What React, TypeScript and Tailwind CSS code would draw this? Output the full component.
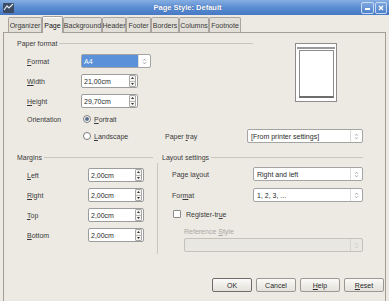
import React from "react";

const U = ({ children }: { children: React.ReactNode }) => (
  <span className="underline underline-offset-[1px] decoration-[0.5px]">{children}</span>
);

function SpinArrows() {
  return (
    <div className="w-[7px] h-[12px] mr-[1px] flex flex-col border border-[#a8a8a8] rounded-[1px] bg-[#f4f3f0]">
      <div className="flex-1 flex items-center justify-center border-b border-[#b8b8b8]">
        <svg width="3" height="2" viewBox="0 0 3 2">
          <polygon points="1.5,0 3,2 0,2" fill="#333" />
        </svg>
      </div>
      <div className="flex-1 flex items-center justify-center">
        <svg width="3" height="2" viewBox="0 0 3 2">
          <polygon points="0,0 3,0 1.5,2" fill="#333" />
        </svg>
      </div>
    </div>
  );
}

function SelArrows({ c = "#8a8a8a" }: { c?: string }) {
  return (
    <svg width="5" height="7" viewBox="0 0 5 7">
      <path d="M1.2 2.6 L2.5 1.2 L3.8 2.6 M1.2 4.4 L2.5 5.8 L3.8 4.4" stroke={c} fill="none" strokeWidth="0.8" />
    </svg>
  );
}

function Spin({ value, w = "w-[57px]" }: { value: string; w?: string }) {
  return (
    <div className={`${w} h-[14px] bg-white border border-[#9c9c9c] rounded-[2px] flex items-center pl-[2px]`}>
      <span className="flex-1 text-[#2a2a2a]">{value}</span>
      <SpinArrows />
    </div>
  );
}

function Select({ value, w, disabled = false }: { value: string; w: string; disabled?: boolean }) {
  return (
    <div
      className={`${w} h-[14px] rounded-[2px] border flex items-center ${
        disabled ? "bg-[#e9e7e2] border-[#c4c1ba]" : "bg-white border-[#a4a4a4]"
      }`}
    >
      <span className="flex-1 pl-[3px] text-[#2a2a2a] whitespace-nowrap overflow-hidden">{value}</span>
      <div className={`w-[12px] h-full flex items-center justify-center border-l ${disabled ? "border-[#d8d5cf]" : "border-[#dcdcdc]"}`}>
        <SelArrows c={disabled ? "#c0c0c0" : "#8a8a8a"} />
      </div>
    </div>
  );
}

function Radio({ checked }: { checked?: boolean }) {
  return (
    <div className="w-[8px] h-[8px] rounded-full border border-[#7c7c7c] bg-white flex items-center justify-center">
      {checked && <div className="w-[4px] h-[4px] rounded-full bg-[#5a6f8c]" />}
    </div>
  );
}

function Header({ label, lineClass }: { label: string; lineClass: string }) {
  return (
    <div className="h-[10px] flex items-center">
      <span className="text-[#3a3a3a] whitespace-nowrap">{label}</span>
      <div className={`h-[1px] bg-[#c9c6bf] ${lineClass}`} />
    </div>
  );
}

function Tab({ label, w, selected }: { label: string; w: string; selected?: boolean }) {
  if (selected)
    return (
      <div
        className={`${w} h-[17px] -mb-[1px] relative z-10 bg-[#edeae4] border border-b-0 border-[#a39f98] rounded-t-[2px] flex items-center justify-center text-[#111] shadow-[inset_0_1px_0_#ffffff]`}
      >
        {label}
      </div>
    );
  return (
    <div
      className={`${w} h-[15px] bg-[#e2dfd8] border border-b-0 border-[#aaa69f] rounded-t-[2px] flex items-center justify-center text-[#3a3a3a]`}
    >
      {label}
    </div>
  );
}

function Btn({ label, def }: { label: React.ReactNode; def?: boolean }) {
  return (
    <div
      className={`w-[40px] h-[14px] rounded-[2px] border ${
        def ? "border-[#6c6c6c]" : "border-[#9a9893]"
      } bg-gradient-to-b from-[#fbfaf8] to-[#e4e1da] flex items-center justify-center text-[#2a2a2a]`}
    >
      <span>{label}</span>
    </div>
  );
}

export default function App() {
  return (
    <div className="w-[389px] h-[301px] bg-[#edeae4] overflow-hidden flex flex-col font-['Liberation_Sans',Arial,sans-serif] text-[7px] leading-[9px]">
      {/* Title bar */}
      <div className="h-[15px] shrink-0 flex items-center bg-gradient-to-b from-[#86aee2] via-[#5b8dd3] to-[#4778c4]">
        <div className="ml-[3px] w-[11px] h-[10px]">
          <svg width="11" height="10" viewBox="0 0 11 10">
            <rect x="0" y="0" width="11" height="10" rx="1" fill="#3d4c63" />
            <path d="M1 7 L4 3 L6 5 L10 1" stroke="#dfe8f4" strokeWidth="1.2" fill="none" />
          </svg>
        </div>
        <div className="flex-1 text-center text-white font-bold text-[7.5px] [text-shadow:0_0_1px_#2a4f8a]">
          Page Style: Default
        </div>
        <div className="flex gap-[1px] mr-[2px]">
          <div className="w-[13px] h-[12px] rounded-[2px] border border-[#c9dbf2] bg-gradient-to-b from-[#7ea7df] to-[#4f82cb] flex items-end justify-center pb-[3px]">
            <div className="w-[5px] h-[2px] bg-white" />
          </div>
          <div className="w-[12px] h-[12px] rounded-[2px] border border-[#c9dbf2] bg-gradient-to-b from-[#7ea7df] to-[#4f82cb] flex items-center justify-center">
            <svg width="6" height="6" viewBox="0 0 6 6">
              <path d="M1 1 L5 5 M5 1 L1 5" stroke="#fff" strokeWidth="1.3" />
            </svg>
          </div>
        </div>
      </div>

      {/* Tabs */}
      <div className="h-[17px] shrink-0 flex items-end pl-[8px]">
        <Tab label="Organizer" w="w-[34px]" />
        <Tab label="Page" w="w-[21px]" selected />
        <Tab label="Background" w="w-[39px]" />
        <Tab label="Header" w="w-[24px]" />
        <Tab label="Footer" w="w-[25px]" />
        <Tab label="Borders" w="w-[28px]" />
        <Tab label="Columns" w="w-[30px]" />
        <Tab label="Footnote" w="w-[32px]" />
      </div>

      {/* Panel */}
      <div className="flex-1 mx-[3px] border-t border-l border-r border-[#a39f98] flex flex-col text-[#3a3a3a]">
        {/* Paper format */}
        <div className="flex pt-[5px]">
          <div className="w-[250px] flex flex-col">
            <div className="pl-[13px] pr-[1px]">
              <Header label="Paper format" lineClass="flex-1 ml-[2px]" />
            </div>
            <div className="mt-[6px] h-[14px] flex items-center pl-[23px]">
              <div className="w-[54px]">
                <U>F</U>ormat
              </div>
              <div className="w-[70px] h-[14px] bg-white border border-[#a4a4a4] rounded-[2px] flex items-center">
                <div className="w-[56px] h-[12px] bg-[#5b91d8] text-white pl-[2px] flex items-center">A4</div>
                <div className="flex-1 h-full flex items-center justify-center border-l border-[#dcdcdc]">
                  <SelArrows />
                </div>
              </div>
            </div>
            <div className="mt-[6px] h-[14px] flex items-center pl-[23px]">
              <div className="w-[54px]">
                <U>W</U>idth
              </div>
              <Spin value="21,00cm" />
            </div>
            <div className="mt-[6px] h-[14px] flex items-center pl-[23px]">
              <div className="w-[54px]">
                <U>H</U>eight
              </div>
              <Spin value="29,70cm" />
            </div>
            <div className="mt-[4px] h-[14px] flex items-center pl-[23px]">
              <div className="w-[56px]">Orientation</div>
              <Radio checked />
              <span className="ml-[3px]">
                <U>P</U>ortrait
              </span>
            </div>
          </div>
          {/* Preview */}
          <div className="ml-[41px] mt-[5px] w-[42px] h-[59px] border border-[#8c8c8c] bg-white flex flex-col pt-[3px] px-[1px]">
            <div className="h-[2px] border-t border-b border-[#9a9a9a]" />
            <div className="mt-[1px] ml-[2px] w-[35px] h-[48px] border border-[#8c8c8c] border-b-2 border-b-[#6e6e6e] bg-white" />
          </div>
        </div>

        {/* Landscape / Paper tray */}
        <div className="mt-[3px] h-[14px] flex items-center">
          <div className="w-[161px] pl-[79px] flex items-center">
            <Radio />
            <span className="ml-[3px]">
              <U>L</U>andscape
            </span>
          </div>
          <div className="w-[82px]">
            Paper <U>t</U>ray
          </div>
          <Select value="[From printer settings]" w="w-[116px]" />
        </div>

        {/* Margins & Layout */}
        <div className="mt-[9px] flex">
          <div className="w-[153px] flex flex-col">
            <div className="pl-[13px] pr-[4px]">
              <Header label="Margins" lineClass="flex-1 ml-[2px]" />
            </div>
            <div className="pt-[6px] flex flex-col gap-[6px]">
              {[
                ["L", "eft"],
                ["R", "ight"],
                ["T", "op"],
                ["B", "ottom"],
              ].map(([a, b]) => (
                <div key={a} className="h-[14px] flex items-center pl-[23px]">
                  <div className="w-[61px]">
                    <U>{a}</U>
                    {b}
                  </div>
                  <Spin value="2,00cm" w="w-[56px]" />
                </div>
              ))}
            </div>
          </div>
          <div className="flex-1 flex flex-col">
            <div className="pl-[5px] pr-[22px]">
              <Header label="Layout settings" lineClass="flex-1 ml-[2px]" />
            </div>
            <div className="mt-[1px] mr-[22px] border-l border-[#c9c6bf] pt-[4px] pb-[2px] flex flex-col">
              <div className="h-[14px] flex items-center pl-[14px]">
                <div className="w-[81px]">
                  Page la<U>y</U>out
                </div>
                <Select value="Right and left" w="w-[110px]" />
              </div>
              <div className="mt-[7px] h-[14px] flex items-center pl-[14px]">
                <div className="w-[81px]">
                  For<U>m</U>at
                </div>
                <Select value="1, 2, 3, ..." w="w-[110px]" />
              </div>
              <div className="mt-[5px] h-[14px] flex items-center pl-[15px]">
                <div className="w-[8px] h-[8px] border border-[#8a8a8a] bg-white rounded-[1px]" />
                <span className="ml-[5px]">
                  Register-tr<U>u</U>e
                </span>
              </div>
              <div className="mt-[5px] h-[10px] flex items-center pl-[26px] text-[#a9a7a2]">
                <span>
                  Reference <U>S</U>tyle
                </span>
              </div>
              <div className="mt-[2px] pl-[26px]">
                <Select value="" w="w-[179px]" disabled />
              </div>
            </div>
          </div>
        </div>

        {/* Buttons */}
        <div className="mt-[24px] flex justify-end gap-[4px] pr-[1px]">
          <Btn label="OK" def />
          <Btn label="Cancel" />
          <Btn
            label={
              <>
                <U>H</U>elp
              </>
            }
          />
          <Btn
            label={
              <>
                <U>R</U>eset
              </>
            }
          />
        </div>
      </div>
    </div>
  );
}
